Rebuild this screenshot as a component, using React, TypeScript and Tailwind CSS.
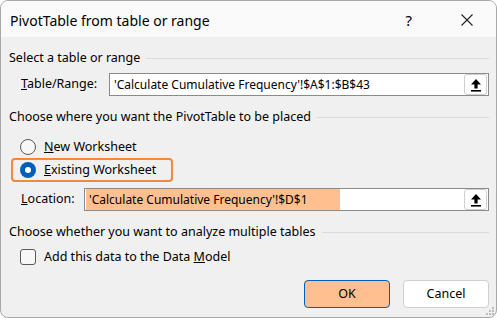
import React from "react"

function UploadIcon() {
  return (
    <svg width="12" height="14" viewBox="0 0 12 14">
      <path d="M6 1 L11 6.5 H7.6 V10.5 H4.4 V6.5 H1 Z" fill="#000" />
      <rect x="1" y="12" width="10" height="1.6" fill="#000" />
    </svg>
  )
}

function SectionHeader({ text }: { text: string }) {
  return (
    <div className="flex items-center h-[20px]">
      <span>{text}</span>
      <div className="flex-1 h-px bg-[#dadada] ml-[6px]" />
    </div>
  )
}

function RefInput({ value, highlight }: { value: string; highlight?: boolean }) {
  return (
    <div className="flex-1 h-[23px] flex items-center bg-white border border-[#8a8a8a] pl-[1px] pr-[1px] text-[12px]">
      <div className={"h-[21px] flex items-center pl-[3px] pr-[3px] " + (highlight ? "bg-[#ffbf8f] w-[254px]" : "")}>
        {value}
      </div>
      <div className="flex-1" />
      <button className="w-[23px] h-[21px] bg-white border border-[#cfcfcf] rounded-[3px] flex items-center justify-center">
        <UploadIcon />
      </button>
    </div>
  )
}

export default function App() {
  return (
    <div
      className="w-[497px] h-[318px] bg-white text-[12.5px] text-black"
      style={{ fontFamily: '"Noto Sans", "Liberation Sans", sans-serif' }}
    >
      <div className="w-[497px] h-[318px] bg-[#f0f0f0] border border-[#a8a8a8] rounded-[8px] overflow-hidden flex flex-col">
        {/* title bar */}
        <div className="h-[36px] bg-[#fafafa] flex items-center pl-[9px] pt-[2px] shrink-0">
          <span className="text-[14px]">PivotTable from table or range</span>
          <div className="flex-1" />
          <span className="text-[15px] mr-[49px]">?</span>
          <svg width="12" height="12" viewBox="0 0 12 12" className="mr-[23px]">
            <path d="M0.5 0.5 L11.5 11.5 M11.5 0.5 L0.5 11.5" stroke="#222" strokeWidth="1.1" />
          </svg>
        </div>

        {/* body */}
        <div className="flex-1 flex flex-col pl-[8px] pr-[7px] relative">
          <div className="mt-[11px]">
            <SectionHeader text="Select a table or range" />
          </div>
          <div className="mt-[5px] flex items-center pl-[12px]">
            <span className="w-[88px]">
              <u>T</u>able/Range:
            </span>
            <RefInput value="'Calculate Cumulative Frequency'!$A$1:$B$43" />
          </div>

          <div className="mt-[11px]">
            <SectionHeader text="Choose where you want the PivotTable to be placed" />
          </div>

          <div className="mt-[10px] h-[20px] flex items-center pl-[11px]">
            <div className="w-[16px] h-[16px] rounded-full border border-[#5a5a5a] bg-[#f7f7f7]" />
            <span className="ml-[8px]">
              <u>N</u>ew Worksheet
            </span>
          </div>

          <div className="mt-[1px] w-[162px] h-[24px] ml-[2px] border-2 border-[#f0883e] rounded-[4px] flex items-center pl-[7px]">
            <div className="w-[16px] h-[16px] rounded-full bg-[#005fb8] flex items-center justify-center">
              <div className="w-[6px] h-[6px] rounded-full bg-white" />
            </div>
            <span className="ml-[8px]">
              <u>E</u>xisting Worksheet
            </span>
          </div>

          <div className="mt-[6px] flex items-center pl-[12px]">
            <span className="w-[63px]">
              <u>L</u>ocation:
            </span>
            <RefInput value="'Calculate Cumulative Frequency'!$D$1" highlight />
          </div>

          <div className="mt-[11px]">
            <SectionHeader text="Choose whether you want to analyze multiple tables" />
          </div>

          <div className="mt-[5px] h-[20px] flex items-center pl-[11px]">
            <div className="w-[16px] h-[16px] rounded-[3px] border border-[#5a5a5a] bg-[#f7f7f7]" />
            <span className="ml-[8px]">
              Add this data to the Data <u>M</u>odel
            </span>
          </div>

          <div className="mt-[13px] flex justify-end gap-[13px]">
            <button className="w-[86px] h-[28px] bg-[#ffbf8f] border border-[#005fb8] rounded-[4px]">OK</button>
            <button className="w-[86px] h-[28px] bg-white border border-[#d0d0d0] rounded-[4px]">Cancel</button>
          </div>

          <svg width="10" height="10" viewBox="0 0 10 10" className="absolute right-[1px] bottom-[1px]">
            <rect x="7" y="1" width="2" height="2" fill="#bdbdbd" />
            <rect x="4" y="4" width="2" height="2" fill="#bdbdbd" />
            <rect x="7" y="4" width="2" height="2" fill="#bdbdbd" />
            <rect x="1" y="7" width="2" height="2" fill="#bdbdbd" />
            <rect x="4" y="7" width="2" height="2" fill="#bdbdbd" />
            <rect x="7" y="7" width="2" height="2" fill="#bdbdbd" />
          </svg>
        </div>
      </div>
    </div>
  )
}
